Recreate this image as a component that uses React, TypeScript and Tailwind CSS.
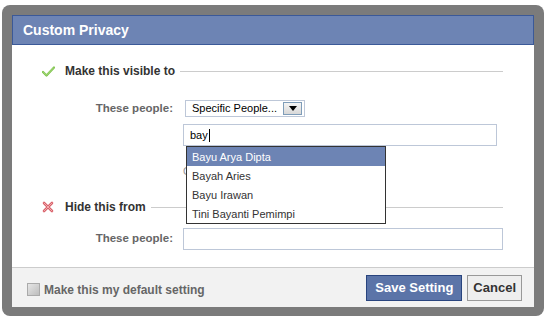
import React from "react";

const font = { fontFamily: '"Liberation Sans", Arial, sans-serif' };

function Check() {
  return (
    <svg width="13" height="11" viewBox="0 0 13 11" className="shrink-0">
      <path d="M1 6 L4.5 9.5 L12 1.5" fill="none" stroke="#7cc24a" strokeWidth="2.2" strokeLinecap="round" strokeLinejoin="round" />
      <path d="M1.5 6.3 L4.5 9.2 L11.6 1.8" fill="none" stroke="#b6e08e" strokeWidth="0.8" strokeLinecap="round" />
    </svg>
  );
}

function Cross() {
  return (
    <svg width="12" height="12" viewBox="0 0 12 12" className="shrink-0">
      <path d="M2 2 L10 10 M10 2 L2 10" fill="none" stroke="#d9616a" strokeWidth="2.6" strokeLinecap="round" />
      <path d="M2 2 L10 10 M10 2 L2 10" fill="none" stroke="#f2b3b6" strokeWidth="0.9" strokeLinecap="round" />
    </svg>
  );
}

export default function App() {
  return (
    <div className="w-[546px] h-[321px] bg-white overflow-hidden" style={font}>
      <div className="ml-[2px] mt-[5px] w-[542px] rounded-[8px] bg-[#7b7b7b] p-[10px] pb-[9px]">
        <div className="flex flex-col w-[522px] bg-white">
          <div className="h-[30px] bg-[#6d84b4] border border-[#3b5998] flex items-center pl-[10px] text-white font-bold text-[14px]">
            Custom Privacy
          </div>
          <div className="flex flex-col pl-[30px] pr-[31px] pt-[19px] pb-[17px] h-[222px]">
            <div className="flex items-center h-[14px]">
              <Check />
              <span className="ml-[10px] font-bold text-[12px] text-[#333]">Make this visible to</span>
              <div className="ml-[5px] flex-1 h-px bg-[#ccc]"></div>
            </div>
            <div className="flex items-center mt-[22px] h-[17px]">
              <div className="w-[131px] text-right font-bold text-[11.5px] text-[#666]">These people:</div>
              <div className="ml-[12px] w-[120px] h-[17px] border border-[#bdc7d8] flex items-center justify-between pl-[6px] pr-[2px] bg-white">
                <span className="text-[11px] text-black leading-none">Specific People...</span>
                <span className="w-[19px] h-[13px] border border-[#7f9db9] bg-gradient-to-b from-[#f4f4f4] to-[#d8d8d8] flex items-center justify-center">
                  <svg width="8" height="5" viewBox="0 0 8 5"><path d="M0 0 H8 L4 5 Z" fill="#000" /></svg>
                </span>
              </div>
            </div>
            <div className="flex mt-[7px]">
              <div className="w-[141px]"></div>
              <div className="relative w-[314px]">
                <div className="h-[22px] border border-[#bdc7d8] flex items-center pl-[6px] text-[11px] text-black">
                  bay<span className="inline-block w-px h-[13px] bg-black ml-px"></span>
                </div>
                <div className="mt-[18px] text-[11px] text-[#999] h-[14px] leading-[14px]">Only</div>
                <div className="absolute left-[3px] top-[22px] w-[200px] border border-[#333] bg-white text-[11px]">
                  <div className="h-[19px] flex items-center pl-[5px] pt-px bg-[#6d84b4] text-white">Bayu Arya Dipta</div>
                  <div className="h-[19px] flex items-center pl-[5px] pt-px text-[#333]">Bayah Aries</div>
                  <div className="h-[19px] flex items-center pl-[5px] pt-px text-[#333]">Bayu Irawan</div>
                  <div className="h-[19px] flex items-center pl-[5px] pt-px text-[#333]">Tini Bayanti Pemimpi</div>
                </div>
              </div>
            </div>
            <div className="flex items-center mt-[22px] h-[14px]">
              <Cross />
              <span className="ml-[11px] font-bold text-[12px] text-[#333]">Hide this from</span>
              <div className="ml-[5px] flex-1 h-px bg-[#ccc]"></div>
            </div>
            <div className="flex items-center mt-[14px]">
              <div className="w-[131px] text-right font-bold text-[11.5px] text-[#666]">These people:</div>
              <div className="ml-[10px] w-[320px] h-[22px] border border-[#bdc7d8] bg-white"></div>
            </div>
          </div>
          <div className="h-[40px] border-t border-[#ccc] bg-[#f2f2f2] flex items-center pl-[15px] pr-[12px]">
            <span className="w-[13px] h-[13px] border border-[#aaa] bg-gradient-to-br from-[#e6e6e6] to-[#bdbdbd] mt-[4px]"></span>
            <span className="ml-[4px] mt-[4px] font-bold text-[12px] text-[#666]">Make this my default setting</span>
            <div className="flex-1"></div>
            <button className="h-[26px] px-[8px] bg-[#5b74a8] border border-[#29447e] text-white font-bold text-[13px]">Save Setting</button>
            <button className="ml-[5px] h-[26px] px-[5px] bg-[#eeeeee] border border-[#999] text-[#333] font-bold text-[13px]">Cancel</button>
          </div>
        </div>
      </div>
    </div>
  );
}
